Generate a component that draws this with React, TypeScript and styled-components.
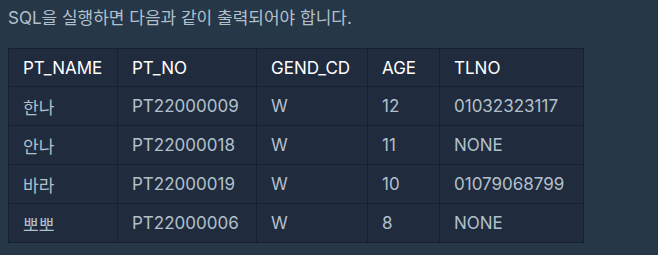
import * as React from "react";
import styled, { createGlobalStyle } from "styled-components";

const GlobalStyle = createGlobalStyle`
  html, body {
    margin: 0;
    padding: 0;
    background: #263747;
  }
  body {
    font-family: "Inter", "Noto Sans CJK KR", sans-serif;
  }
`;

const Page = styled.div`
  padding: 4px 8px 0;
  width: 658px;
  height: 255px;
  box-sizing: border-box;
`;

const Intro = styled.p`
  margin: 0 0 16px;
  font-size: 17px;
  line-height: 28px;
  color: #b2c0cc;
`;

const Table = styled.table`
  border-collapse: collapse;
  table-layout: fixed;
  width: 575px;
  background: #202b3d;
  border: 1px solid #172030;
  font-size: 17px;
`;

const Cell = styled.td<{ $head?: boolean }>`
  height: ${(p) => (p.$head ? 38 : 39)}px;
  box-sizing: border-box;
  padding: 0 14px;
  border: 1px solid #172030;
  text-align: left;
  color: ${(p) => (p.$head ? "#ffffff" : "#b2c0cc")};
  font-weight: 400;
  white-space: nowrap;
`;

const widths = [109, 139, 111, 72, 144];
const head = ["PT_NAME", "PT_NO", "GEND_CD", "AGE", "TLNO"];
const rows = [
  ["한나", "PT22000009", "W", "12", "01032323117"],
  ["안나", "PT22000018", "W", "11", "NONE"],
  ["바라", "PT22000019", "W", "10", "01079068799"],
  ["뽀뽀", "PT22000006", "W", "8", "NONE"],
];

export default function App() {
  return (
    <Page>
      <GlobalStyle />
      <Intro>SQL을 실행하면 다음과 같이 출력되어야 합니다.</Intro>
      <Table>
        <colgroup>
          {widths.map((w, i) => (
            <col key={i} style={{ width: w }} />
          ))}
        </colgroup>
        <thead>
          <tr>
            {head.map((h) => (
              <Cell as="th" key={h} $head>
                {h}
              </Cell>
            ))}
          </tr>
        </thead>
        <tbody>
          {rows.map((r) => (
            <tr key={r[1]}>
              {r.map((c, i) => (
                <Cell key={i}>{c}</Cell>
              ))}
            </tr>
          ))}
        </tbody>
      </Table>
    </Page>
  );
}
